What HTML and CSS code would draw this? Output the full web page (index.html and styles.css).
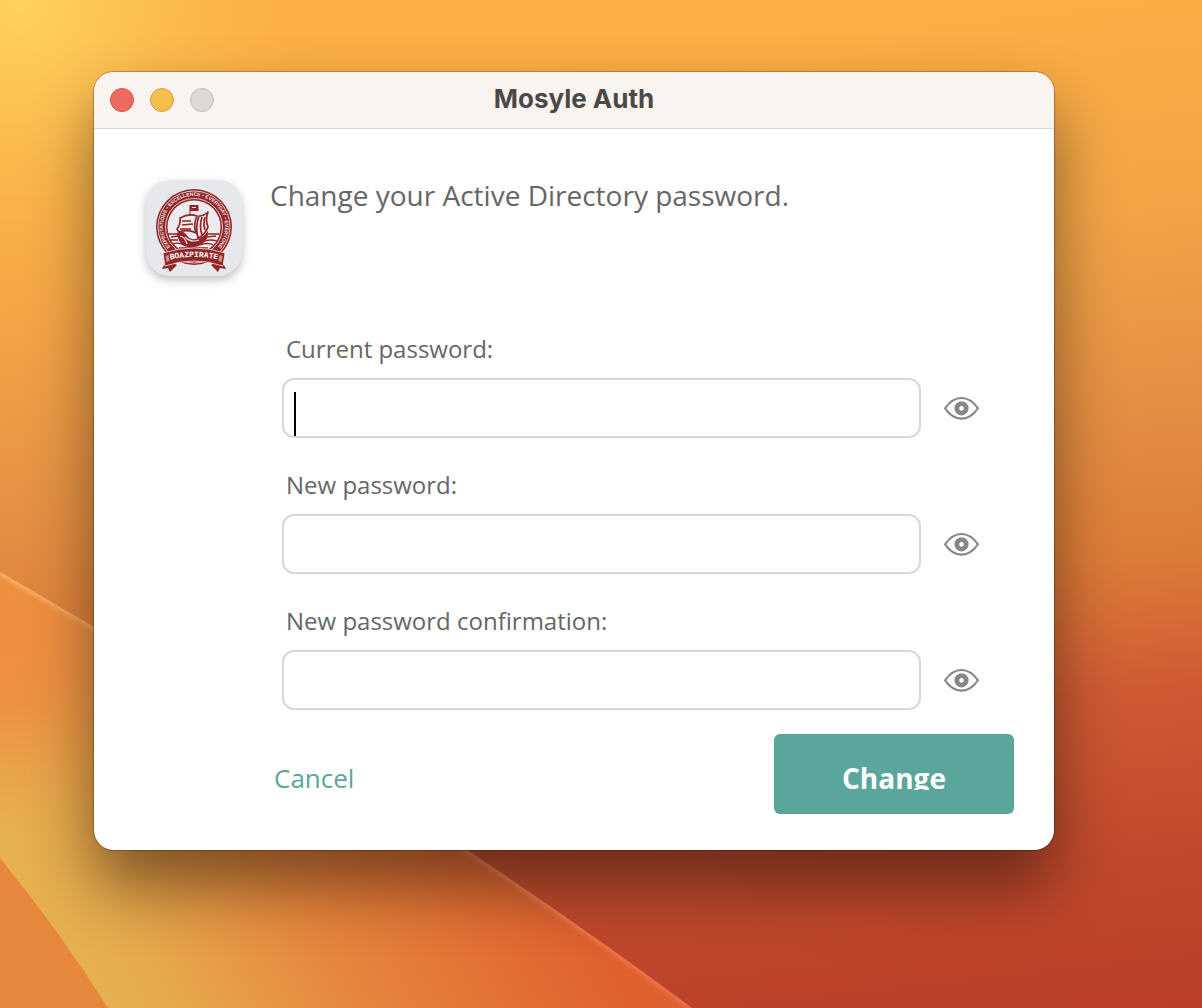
FILE: index.html
```html
<!DOCTYPE html>
<html lang="en">
<head>
  <meta charset="UTF-8">
  <title>Mosyle Auth</title>
  <link rel="stylesheet" href="styles.css">
</head>
<body>

<div class="desktop">
  <!-- Wallpaper -->
  <svg class="wallpaper" viewBox="0 0 1202 1008" preserveAspectRatio="none" aria-hidden="true">
    <defs>
      <linearGradient id="sky" gradientUnits="userSpaceOnUse" x1="1090" y1="0" x2="1200" y2="1008">
        <stop offset="0" stop-color="#faae45"/>
        <stop offset=".2" stop-color="#f3a546"/>
        <stop offset=".4" stop-color="#e38f42"/>
        <stop offset=".55" stop-color="#dc7b38"/>
        <stop offset=".68" stop-color="#cf5b33"/>
        <stop offset=".85" stop-color="#c0492c"/>
        <stop offset="1" stop-color="#b93f29"/>
      </linearGradient>
      <radialGradient id="sun" gradientUnits="userSpaceOnUse" cx="20" cy="0" r="330">
        <stop offset="0" stop-color="#ffd25f"/>
        <stop offset=".35" stop-color="#fdc455" stop-opacity=".8"/>
        <stop offset="1" stop-color="#faae45" stop-opacity="0"/>
      </radialGradient>
      <linearGradient id="band" gradientUnits="userSpaceOnUse" x1="50" y1="930" x2="460" y2="700">
        <stop offset="0" stop-color="#e7b150"/>
        <stop offset=".15" stop-color="#e6a94b"/>
        <stop offset=".5" stop-color="#e6853c"/>
        <stop offset="1" stop-color="#de602f"/>
      </linearGradient>
      <radialGradient id="glow" gradientUnits="userSpaceOnUse" cx="0" cy="630" r="200">
        <stop offset="0" stop-color="#f08d3e"/>
        <stop offset=".4" stop-color="#ee8f40" stop-opacity=".9"/>
        <stop offset="1" stop-color="#e8a046" stop-opacity="0"/>
      </radialGradient>
      <linearGradient id="edge" x1="0" y1="0" x2="1" y2="1">
        <stop offset="0" stop-color="#f8b568"/>
        <stop offset="1" stop-color="#ee704a"/>
      </linearGradient>
      <filter id="soft"><feGaussianBlur stdDeviation="2"/></filter>
      <clipPath id="bandClip">
        <path d="M0 572 Q48 600 94 627 Q300 736 467 850 Q586 929 692 1008 H0Z"/>
      </clipPath>
    </defs>
    <rect width="1202" height="1008" fill="url(#sky)"/>
    <rect width="1202" height="1008" fill="url(#sun)"/>
    <g clip-path="url(#bandClip)">
      <rect y="560" width="720" height="448" fill="url(#band)"/>
      <rect y="560" width="720" height="448" fill="url(#glow)"/>
      <path d="M0 572 Q48 600 94 627 Q300 736 467 850 Q586 929 692 1008" fill="none" stroke="url(#edge)" stroke-width="6" filter="url(#soft)"/>
    </g>
    <path d="M0 858 Q60 932 108 1008 H0Z" fill="#e6873b"/>
  </svg>

  <main class="window">
    <header class="titlebar">
      <div class="lights">
        <button class="light close" aria-label="Close"></button>
        <button class="light minimize" aria-label="Minimize"></button>
        <button class="light zoom" aria-label="Zoom" disabled></button>
      </div>
      <h1>Mosyle Auth</h1>
    </header>

    <form class="content">
      <div class="intro">
        <div class="app-icon">
          <svg viewBox="0 0 96 96" role="img" aria-label="School seal">
            <defs>
              <path id="ring" d="M24.700 67.300 A31 31 0 1 1 71.300 67.300"/>
              <path id="ribbonLine" d="M18 81 Q48 73 78 81"/>
            </defs>
            <circle cx="48" cy="47" r="38" fill="#922527"/>
            <circle cx="48" cy="47" r="36" fill="none" stroke="#e0c8ca" stroke-width="1"/>
            <circle cx="48" cy="47" r="28.500" fill="none" stroke="#e0c8ca" stroke-width="1"/>
            <circle cx="48" cy="47" r="26.500" fill="#ecebed"/>
            <text class="seal-text"><textPath href="#ring" startOffset="50%" text-anchor="middle">EXPECTATIONS • EXCELLENCE • EVERYDAY • EVERYONE</textPath></text>
            <!-- ship: flag, masts, sails, hull -->
            <path d="M43.500 25h9v6h-8v5h-1z" fill="#922527"/>
            <path d="M46 27.500h4" stroke="#ecebed" stroke-width="1"/>
            <g fill="none" stroke="#922527" stroke-width="1.700" stroke-linejoin="round">
              <path d="M34 38q9-5 17-2q-4 9-1 17q-8-4-17-1l-2-3q4-5 3-11z"/>
              <path d="M36 41h9M36 45l11-1M34 49h11"/>
              <path d="M53 36q5 0 9-4q-3 8 0 15q-3 8-10 11q-3-11 1-22z"/>
              <path d="M56 37q-3 9 0 18M59 37q-2 7 0 13"/>
            </g>
            <path d="M31 53q5-3 9 1q3 6 9 5q7 0 13-8q1 9-7 14q-8 4-17 1q-6-4-7-13z" fill="#922527"/>
            <path d="M34 56q5 1 7 8M39 57q6 6 14 3" fill="none" stroke="#ecebed" stroke-width="1.200"/>
            <path d="M22 54h10M25 57l7-1M23 60h9M27 64q5-2 11 1M62 54h11M61 57l9-1M59 61q6-2 12 0M54 65q8-3 13 0M33 68h29" fill="none" stroke="#922527" stroke-width="1.300"/>
            <!-- ribbon -->
            <path d="M21 79l-5 10 6-1 2 4 7-7zM75 79l5 10-6-1-2 4-7-7z" fill="#922527"/>
            <path d="M17 73Q48 63 79 73l-2 13Q48 76 19 86z" fill="#922527" stroke="#ecebed" stroke-width=".8"/>
            <path d="M19.500 76l3-1 1 6-3 1zM76.500 76l-3-1-1 6 3 1z" fill="#d0908a"/>
            <text class="ribbon-text"><textPath href="#ribbonLine" startOffset="50%" text-anchor="middle">BOAZPIRATE</textPath></text>
          </svg>
        </div>
        <h2>Change your Active Directory password.</h2>
      </div>

      <div class="fields">
        <div class="field">
          <label for="current">Current password:</label>
          <div class="entry">
            <div class="box">
              <input type="password" id="current">
              <span class="caret"></span>
            </div>
            <button type="button" class="reveal" aria-label="Show current password">
              <svg viewBox="0 0 36 24"><path d="M2 12Q9 2 18 2T34 12Q27 22 18 22T2 12Z" fill="none" stroke="#868686" stroke-width="2" stroke-linejoin="round"/><circle cx="18" cy="12" r="4.600" fill="none" stroke="#868686" stroke-width="4.600"/></svg>
            </button>
          </div>
        </div>
        <div class="field">
          <label for="new">New password:</label>
          <div class="entry">
            <div class="box"><input type="password" id="new"></div>
            <button type="button" class="reveal" aria-label="Show new password">
              <svg viewBox="0 0 36 24"><path d="M2 12Q9 2 18 2T34 12Q27 22 18 22T2 12Z" fill="none" stroke="#868686" stroke-width="2" stroke-linejoin="round"/><circle cx="18" cy="12" r="4.600" fill="none" stroke="#868686" stroke-width="4.600"/></svg>
            </button>
          </div>
        </div>
        <div class="field">
          <label for="confirm">New password confirmation:</label>
          <div class="entry">
            <div class="box"><input type="password" id="confirm"></div>
            <button type="button" class="reveal" aria-label="Show password confirmation">
              <svg viewBox="0 0 36 24"><path d="M2 12Q9 2 18 2T34 12Q27 22 18 22T2 12Z" fill="none" stroke="#868686" stroke-width="2" stroke-linejoin="round"/><circle cx="18" cy="12" r="4.600" fill="none" stroke="#868686" stroke-width="4.600"/></svg>
            </button>
          </div>
        </div>
      </div>

      <div class="actions">
        <button type="button" class="cancel">Cancel</button>
        <button type="button" class="change"><span>Change</span></button>
      </div>
    </form>
  </main>
</div>

</body>
</html>
```
FILE: styles.css
```css
* {
  box-sizing: border-box;
}
body {
  margin: 0;
  font-family: "Open Sans", "Noto Sans", sans-serif;
  color: #666;
}
h1, h2 {
  margin: 0;
}
button {
  font-family: inherit;
  border: none;
  padding: 0;
  background: none;
}
.desktop {
  display: grid;
  min-height: 100vh;
  overflow: hidden;
}
.wallpaper,
.window {
  grid-area: 1 / 1;
}
.wallpaper {
  width: 100%;
  height: 100%;
}
.window {
  align-self: start;
  margin: 72px 148px 0 94px;
  background: #fff;
  border-radius: 20px;
  box-shadow: 0 0 1px 1px rgba(0, 0, 0, 0.25), 0 36px 64px rgba(0, 0, 0, 0.45);
  position: relative;
}
.titlebar {
  display: grid;
  grid-template-columns: 1fr auto 1fr;
  align-items: center;
  height: 57px;
  padding: 0 16px;
  background: #f9f4f0;
  border-bottom: 1px solid #dad7d4;
  border-radius: 20px 20px 0 0;
}
.titlebar h1 {
  font-family: Inter, sans-serif;
  font-size: 26px;
  line-height: 32px;
  font-weight: 700;
  color: #4b4947;
  padding-bottom: 2px;
}
.lights {
  display: flex;
  gap: 16px;
}
.light {
  width: 24px;
  height: 24px;
  border-radius: 50%;
}
.close {
  background: #ed6a5e;
  border: 1px solid #d5554a;
}
.minimize {
  background: #f5bf4f;
  border: 1px solid #d8a13d;
}
.zoom {
  background: #dddad6;
  border: 1px solid #c2bfbb;
}
.content {
  padding: 51px 40px 36px 52px;
}
.intro {
  display: flex;
  gap: 28px;
  height: 152px;
}
.app-icon {
  width: 96px;
  height: 96px;
  border-radius: 24px;
  background: #e7e8eb;
  box-shadow: 0 4px 10px rgba(0, 0, 0, 0.25);
}
.app-icon svg {
  display: block;
}
.seal-text {
  font: bold 5px "Liberation Sans", sans-serif;
  fill: #f3e6e6;
}
.ribbon-text {
  font: bold 8px "Liberation Mono", monospace;
  fill: #fff;
}
.intro h2 {
  font-size: 28px;
  line-height: 30px;
  font-weight: 400;
}
.fields {
  display: flex;
  flex-direction: column;
  gap: 30px;
  padding-left: 136px;
}
.field label {
  display: block;
  padding-left: 4px;
  margin-bottom: 12px;
  font-size: 24px;
  line-height: 34px;
}
.entry {
  display: flex;
  align-items: center;
  gap: 22px;
  padding-right: 34px;
}
.box {
  flex: 1;
  position: relative;
}
.box input {
  display: block;
  width: 100%;
  height: 60px;
  padding: 12px;
  font-size: 24px;
  border: 2px solid #d8d8d8;
  border-radius: 12px;
  background: #fff;
  outline: none;
}
.caret {
  position: absolute;
  left: 12px;
  top: 14px;
  width: 2px;
  height: 44px;
  background: #000;
}
.reveal {
  width: 37px;
}
.reveal svg {
  display: block;
  width: 100%;
}
.actions {
  display: flex;
  justify-content: space-between;
  align-items: center;
  padding-left: 128px;
  margin-top: 24px;
}
.cancel {
  font-size: 26px;
  line-height: 40px;
  padding-top: 8px;
  color: #5ba69c;
}
.change {
  width: 240px;
  height: 80px;
  border-radius: 6px;
  background: #5ba69c;
  color: #fff;
  font-size: 28px;
  font-weight: 700;
}
/* label box is shorter than its line, the descender gets cut */
.change span {
  display: block;
  height: 32px;
  line-height: 40px;
  overflow: hidden;
}
```
